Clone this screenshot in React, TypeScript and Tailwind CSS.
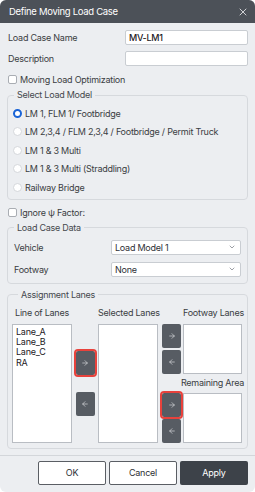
import React from 'react';
import { X, ChevronDown, ArrowRight, ArrowLeft } from 'lucide-react';

const FONT = { fontFamily: 'Inter, "Noto Sans", "Liberation Sans", sans-serif' };

const Check = ({ label }: { label: string }) => (
    <div className="flex items-center h-[13px] gap-[3px] pl-[1px]">
        <span className="w-[9px] h-[9px] bg-white border border-[#a9adb3] rounded-[2px]" />
        <span className="text-[#3a3d42] leading-none">{label}</span>
    </div>
);

const Radio = ({ label, checked }: { label: string; checked?: boolean }) => (
    <div className="flex items-center h-[18.5px] gap-[3px] pl-[5px]">
        {checked ? (
            <span className="w-[9px] h-[9px] rounded-full bg-white border-[2.5px] border-[#1a64d6]" />
        ) : (
            <span className="w-[9px] h-[9px] rounded-full bg-white border border-[#d4d7db]" />
        )}
        <span className="text-[#3a3d42] leading-none">{label}</span>
    </div>
);

const ArrowBtn = ({ dir, hot }: { dir: 'r' | 'l'; hot?: boolean }) => (
    <button
        className={
            'w-[19px] h-[24px] bg-[#575c63] rounded-[2px] flex items-center justify-center ' +
            (hot ? 'outline-2 outline-[#e8423c]' : '')
        }
    >
        {dir === 'r' ? (
            <ArrowRight size={8} strokeWidth={2} color="#d9dbde" />
        ) : (
            <ArrowLeft size={8} strokeWidth={2} color="#d9dbde" />
        )}
    </button>
);

const Group = ({ title, className, children }: { title: string; className?: string; children: React.ReactNode }) => (
    <fieldset className={'border border-[#d6d9dd] rounded-[4px] ' + (className || '')}>
        <legend className="ml-[6px] px-[3px] leading-[12px] text-[#45484d]">{title}</legend>
        {children}
    </fieldset>
);

const Select = ({ value }: { value: string }) => (
    <div className="w-[130px] h-[15px] bg-white border border-[#c9cdd2] rounded-[2px] flex items-center justify-between pl-[3px] pr-[4px]">
        <span className="text-[#2d3035] leading-none">{value}</span>
        <ChevronDown size={8} strokeWidth={2} color="#6b7078" />
    </div>
);

export default function App() {
    return (
        <div
            style={FONT}
            className="w-[255px] h-[492px] bg-[#eceef1] rounded-[6px] overflow-hidden flex flex-col text-[9px] tracking-[-0.25px]"
        >
            {/* Header */}
            <div className="h-[23px] bg-[#4c5158] flex items-center justify-between pl-[9px] pr-[6px] shrink-0">
                <span className="text-[9.5px] tracking-[-0.3px] text-white leading-none">Define Moving Load Case</span>
                <X size={12} strokeWidth={1.6} color="#f2f3f5" />
            </div>

            <div className="px-[7px]">
                <div className="mt-[7px] h-[15px] flex items-center justify-between pl-[1px]">
                    <span className="text-[#3a3d42] leading-none">Load Case Name</span>
                    <div className="w-[123px] h-[15px] bg-white border border-[#c9cdd2] rounded-[2px] flex items-center pl-[3px]">
                        <span className="text-[#1d2024] font-medium leading-none">MV-LM1</span>
                    </div>
                </div>
                <div className="mt-[6px] h-[15px] flex items-center justify-between pl-[1px]">
                    <span className="text-[#3a3d42] leading-none">Description</span>
                    <div className="w-[123px] h-[15px] bg-white border border-[#c9cdd2] rounded-[2px]" />
                </div>

                <div className="mt-[7px]">
                    <Check label="Moving Load Optimization" />
                </div>

                <Group title="Select Load Model" className="mt-[3px] pt-[3px] pb-[2px]">
                    <Radio label="LM 1, FLM 1/ Footbridge" checked />
                    <Radio label="LM 2,3,4 / FLM 2,3,4 / Footbridge / Permit Truck" />
                    <Radio label="LM 1 & 3 Multi" />
                    <Radio label="LM 1 & 3 Multi (Straddling)" />
                    <Radio label="Railway Bridge" />
                </Group>

                <div className="mt-[6px]">
                    <Check label="Ignore ψ Factor:" />
                </div>

                <Group title="Load Case Data" className="mt-[3px] pt-[6px] pb-[6px] pr-[6px]">
                    <div className="flex flex-col gap-[7px]">
                        <div className="h-[15px] flex items-center justify-between pl-[6px]">
                            <span className="text-[#3a3d42] leading-none">Vehicle</span>
                            <Select value="Load Model 1" />
                        </div>
                        <div className="h-[15px] flex items-center justify-between pl-[6px]">
                            <span className="text-[#3a3d42] leading-none">Footway</span>
                            <Select value="None" />
                        </div>
                    </div>
                </Group>

                <Group title="Assignment Lanes" className="mt-[5px] pt-[6px] pb-[5px] pl-[4px]">
                    <div className="flex">
                        {/* Line of Lanes */}
                        <div className="w-[60px] flex flex-col">
                            <div className="h-[12px] text-center leading-[12px] text-[#3a3d42] whitespace-nowrap">Line of Lanes</div>
                            <div className="mt-[5px] h-[119px] bg-white border border-[#b9bdc3] pl-[3px] pt-[2px] leading-[10.4px] text-[#1d2024]">
                                <div>Lane_A</div>
                                <div>Lane_B</div>
                                <div>Lane_C</div>
                                <div>RA</div>
                            </div>
                        </div>
                        <div className="w-[26px] flex flex-col items-center pt-[44px]">
                            <ArrowBtn dir="r" hot />
                            <div className="mt-[17px]">
                                <ArrowBtn dir="l" />
                            </div>
                        </div>
                        {/* Selected Lanes */}
                        <div className="w-[60px] flex flex-col">
                            <div className="h-[12px] text-center leading-[12px] text-[#3a3d42] whitespace-nowrap">Selected Lanes</div>
                            <div className="mt-[5px] h-[119px] bg-white border border-[#b9bdc3]" />
                        </div>
                        {/* Footway / Remaining */}
                        <div className="ml-[4px] flex flex-col">
                            <div className="h-[12px] pl-[21px] w-[80px] text-center leading-[12px] text-[#3a3d42] whitespace-nowrap">Footway Lanes</div>
                            <div className="mt-[5px] flex gap-[2px]">
                                <div className="flex flex-col gap-[2px]">
                                    <ArrowBtn dir="r" />
                                    <ArrowBtn dir="l" />
                                </div>
                                <div className="w-[59px] h-[50px] bg-white border border-[#b9bdc3]" />
                            </div>
                            <div className="h-[19px] pl-[21px] w-[80px] flex items-center justify-center text-[#3a3d42] whitespace-nowrap">Remaining Area</div>
                            <div className="flex gap-[2px]">
                                <div className="flex flex-col gap-[2px]">
                                    <ArrowBtn dir="r" hot />
                                    <ArrowBtn dir="l" />
                                </div>
                                <div className="w-[59px] h-[50px] bg-white border border-[#b9bdc3]" />
                            </div>
                        </div>
                    </div>
                </Group>
            </div>

            <div className="mt-[6px] border-t border-[#d3d6da]" />

            {/* Footer */}
            <div className="mt-[5px] flex justify-end gap-[3px] pr-[7px]">
                <button className="w-[68px] h-[24px] bg-white border border-[#5a5e64] rounded-[2px] text-[#2d3035]">OK</button>
                <button className="w-[68px] h-[24px] bg-white border border-[#5a5e64] rounded-[2px] text-[#2d3035]">Cancel</button>
                <button className="w-[68px] h-[24px] bg-[#3d4249] rounded-[2px] text-white">Apply</button>
            </div>
        </div>
    );
}
